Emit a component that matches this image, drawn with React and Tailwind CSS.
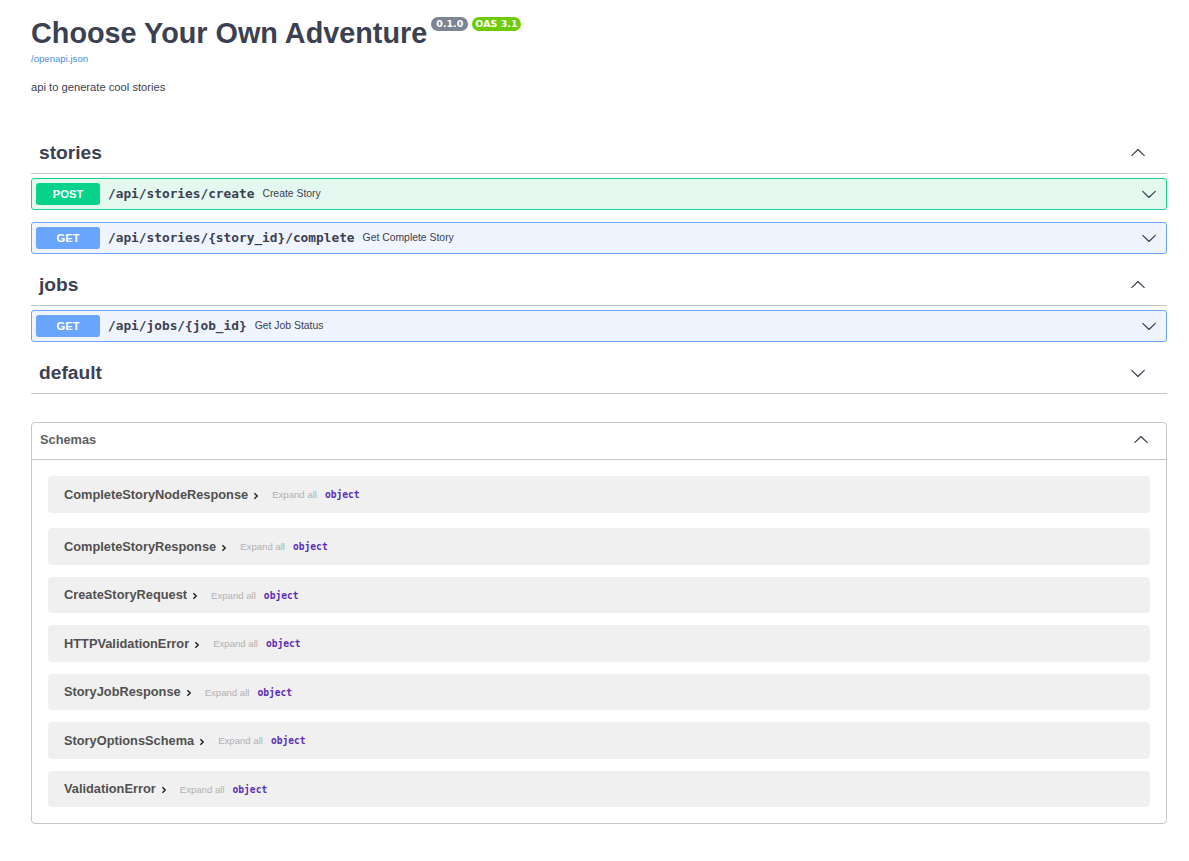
import React from "react";

const Chevron = ({ up = false, className = "" }) => (
  <svg
    viewBox="0 0 20 20"
    width="16"
    height="16"
    className={className}
    style={up ? { transform: "rotate(180deg)" } : undefined}
  >
    <path
      fill="#3b4151"
      d="M17.418 6.109c.272-.268.709-.268.979 0s.271.701 0 .969l-7.908 7.83c-.27.268-.707.268-.979 0l-7.908-7.83c-.27-.268-.27-.701 0-.969.271-.268.709-.268.979 0L10 13.25l7.418-7.141z"
    />
  </svg>
);

const Caret = () => (
  <svg viewBox="0 0 10 10" width="8" height="8" className="ml-[4px] mt-[3px]">
    <path d="M3 1.5 L6.5 5 L3 8.5" fill="none" stroke="#222" strokeWidth="1.8" />
  </svg>
);

const TagRow = ({ name, open = true }) => (
  <div className="flex items-center h-[40px] border-b border-[#c4c6cb] pl-[8px] pr-[21px]">
    <h3 className="flex-1 text-[19.2px] font-bold text-[#3b4151] leading-none mb-[2px]">{name}</h3>
    <Chevron up={open} className="mb-[2px]" />
  </div>
);

const Op = ({ method, path, summary }) => {
  const post = method === "POST";
  return (
    <div
      className={
        "flex items-center h-[32px] rounded-[3px] border px-[4px] " +
        (post ? "border-[#15d38c] bg-[#e5f8f0]" : "border-[#6aa5fe] bg-[#eff4ff]")
      }
    >
      <span
        className={
          "w-[64px] h-[22px] flex items-center justify-center rounded-[3px] text-white text-[11.2px] font-bold " +
          (post ? "bg-[#06d28b]" : "bg-[#69a4ff]")
        }
      >
        {method}
      </span>
      <span className="ml-[8px] font-['DejaVu_Sans_Mono',monospace] font-bold text-[12.8px] text-[#3b4151]">
        {path}
      </span>
      <span className="ml-[8px] text-[10.4px] text-[#3b4151] flex-1">{summary}</span>
      <Chevron className="mr-[5px]" />
    </div>
  );
};

const Model = ({ name, first }) => (
  <div
    className={
      "flex items-center h-[36.5px] rounded-[4px] bg-[#f0f0f0] px-[16px] " +
      (first ? "mb-[15.5px]" : "mb-[12px]")
    }
  >
    <span className="text-[12.8px] font-bold text-[#505050]">{name}</span>
    <Caret />
    <span className="ml-[12px] text-[9.6px] text-[#b0b0b0] mt-[2px]">Expand all</span>
    <span className="ml-[8px] font-['DejaVu_Sans_Mono',monospace] font-bold text-[9.6px] text-[#5b2db5] mt-[2px]">
      object
    </span>
  </div>
);

export default function App() {
  return (
    <div className="min-h-[861px] bg-white font-['Liberation_Sans',Arial,sans-serif] text-[#3b4151]">
      <div className="pl-[31px] pr-[22px] pt-[17px] pb-[37px] w-full">
        <div className="flex items-start">
          <h2 className="text-[28.8px] font-bold text-[#3b4151] leading-[33px]">Choose Your Own Adventure</h2>
          <span className="ml-[4px] h-[14px] px-[5px] flex items-center rounded-full bg-[#7d8492] text-white text-[9.5px] font-bold font-['DejaVu_Sans',sans-serif]">
            0.1.0
          </span>
          <span className="ml-[4px] h-[14px] px-[3px] flex items-center rounded-full bg-[#6dcb05] text-white text-[9.5px] font-bold font-['DejaVu_Sans',sans-serif]">
            OAS 3.1
          </span>
        </div>
        <div className="mt-[3px] text-[9.6px] leading-[11px] text-[#4990e2]">/openapi.json</div>
        <div className="mt-[17px] text-[11.2px] leading-[13px] text-[#3b4151]">api to generate cool stories</div>

        <div className="mt-[40px]">
          <TagRow name="stories" />
          <div className="mt-[4px] flex flex-col gap-[12px]">
            <Op method="POST" path="/api/stories/create" summary="Create Story" />
            <Op method="GET" path="/api/stories/{story_id}/complete" summary="Get Complete Story" />
          </div>
        </div>

        <div className="mt-[12px]">
          <TagRow name="jobs" />
          <div className="mt-[4px] flex flex-col gap-[12px]">
            <Op method="GET" path="/api/jobs/{job_id}" summary="Get Job Status" />
          </div>
        </div>

        <div className="mt-[12px]">
          <TagRow name="default" open={false} />
        </div>

        <div className="mt-[28px] border border-[#c4c6cb] rounded-[4px]">
          <div className="flex items-center h-[37px] border-b border-[#c4c6cb] pl-[8px] pr-[17px] pb-[3px]">
            <h4 className="flex-1 text-[12.8px] font-bold text-[#606060]">Schemas</h4>
            <Chevron up />
          </div>
          <div className="px-[16px] pt-[16px] pb-[3.5px]">
            <Model name="CompleteStoryNodeResponse" first />
            <Model name="CompleteStoryResponse" />
            <Model name="CreateStoryRequest" />
            <Model name="HTTPValidationError" />
            <Model name="StoryJobResponse" />
            <Model name="StoryOptionsSchema" />
            <Model name="ValidationError" />
          </div>
        </div>
      </div>
    </div>
  );
}
